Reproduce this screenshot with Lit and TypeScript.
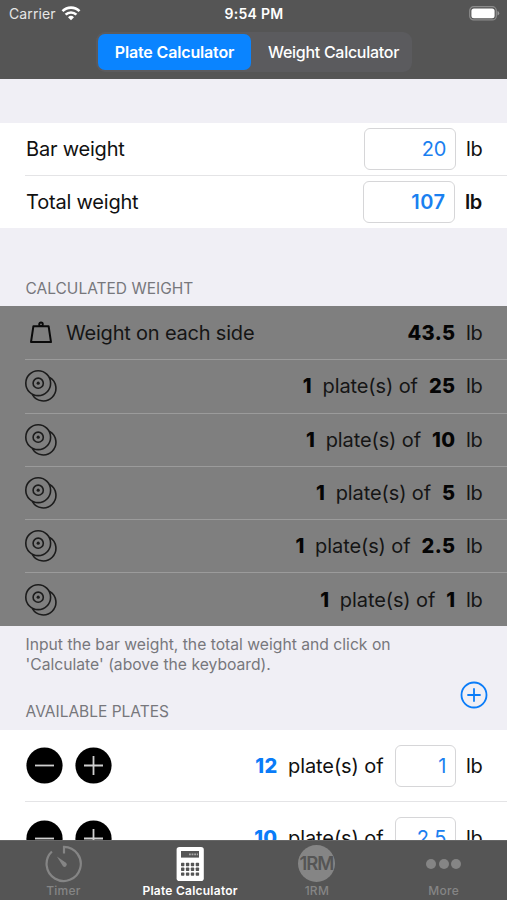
import { LitElement, html, css, svg } from "lit";
import { customElement } from "lit/decorators.js";

const weightIcon = html`<svg width="22" height="23" viewBox="0 0 22 23" fill="none" stroke="#0a0a0a">
  <path d="M3.4 5.2H18.6L21 21.1H1Z" stroke-width="2" stroke-linejoin="round"/>
  <circle cx="11" cy="3.3" r="1.8" stroke-width="1.9"/>
</svg>`;

const platesIcon = html`<svg width="32" height="32" viewBox="0 0 32 32" fill="none" stroke="#1c1c1c" stroke-width="1.6">
  <circle cx="13.2" cy="13.2" r="12.4"/>
  <circle cx="13.2" cy="13.2" r="5.1"/>
  <circle cx="13.2" cy="13.2" r="1.6" fill="#1c1c1c" stroke="none"/>
  <path d="M24.6 7.4A12.6 12.6 0 1 1 7.4 24.6"/>
</svg>`;

const roundButton = (plus: boolean) => html`<svg width="37" height="37" viewBox="0 0 37 37">
  <circle cx="18.5" cy="18.5" r="18.1" fill="#000"/>
  <path d=${plus ? "M9 18.5H28M18.5 9V28" : "M9 18.5H28"} stroke="#d0d0d0" stroke-width="1.8"/>
</svg>`;

const addIcon = html`<svg width="28" height="28" viewBox="0 0 28 28" fill="none" stroke="#0a7cf8">
  <circle cx="14" cy="14" r="12.5" stroke-width="1.8"/>
  <path d="M8 14H20M14 8V20" stroke-width="1.8" stroke-linecap="round"/>
</svg>`;

const timerIcon = html`<svg width="38" height="38" viewBox="0 0 38 38" fill="none" stroke="#858585">
  <path d="M20 8.5V1.8A17.1 17.1 0 1 1 7.9 6.5" stroke-width="2.2"/>
  <path d="M12.9 11.5L22 17.8A2.2 2.2 0 0 1 19 21.2Z" fill="#858585" stroke="none"/>
</svg>`;

const keys = [0, 1, 2].flatMap((r) => [0, 1, 2, 3].map((c) => ({ x: 5 + c * 4.9, y: 16.8 + r * 4.8 })));
const calcIcon = html`<svg width="28" height="36" viewBox="0 0 28 36">
  <rect x="0.6" y="1" width="27.2" height="34" rx="2.8" fill="#fff"/>
  <rect x="5" y="5" width="18" height="6.6" fill="#555"/>
  <path d="M13 8.3H22" stroke="#aaa" stroke-width="1.8" stroke-dasharray="1.8 .8"/>
  ${keys.map((k) => svg`<rect x=${k.x} y=${k.y} width="3.4" height="3.4" rx="0.7" fill="#555"/>`)}
</svg>`;

const wifiIcon = html`<svg width="20" height="15" viewBox="0 0 20 15" fill="none" stroke="#fff" stroke-width="2.6">
  <path d="M1.5 5.2A12 12 0 0 1 18.5 5.2"/>
  <path d="M4.6 8.7A7.6 7.6 0 0 1 15.4 8.7"/>
  <path d="M10 14.2L7 11.2A4.3 4.3 0 0 1 13 11.2Z" fill="#fff" stroke="none"/>
</svg>`;

const batteryIcon = html`<svg width="31" height="15" viewBox="0 0 31 15">
  <rect x="0.7" y="0.7" width="26.6" height="13.2" rx="4" fill="none" stroke="#8c8c8c" stroke-width="1.2"/>
  <rect x="2.4" y="2.4" width="23.2" height="9.8" rx="2.5" fill="#fff"/>
  <path d="M28.5 5V9.6Q30.2 9 30.2 7.3Q30.2 5.6 28.5 5Z" fill="#999"/>
</svg>`;

@customElement("app-root")
export class AppRoot extends LitElement {
  static styles = css`
    :host { display: flex; flex-direction: column; width: 507px; height: 900px; overflow: hidden;
      background: #f0eff5; color: #111; font: 400 20px/24px Inter, sans-serif; box-sizing: border-box; }
    * { box-sizing: border-box; }
    svg { display: block; flex: none; }
    header { height: 79px; flex: none; background: #555; color: #fff; }
    .status { display: grid; grid-template-columns: 1fr auto 1fr; align-items: center; height: 27px;
      padding: 0 7px 0 9px; font-size: 14px; line-height: 27px; }
    .carrier { display: flex; align-items: center; gap: 5px; color: #e6e6e6; letter-spacing: 0.1px; }
    .time { font-weight: 600; font-size: 14px; letter-spacing: 0.25px; margin-right: 1px; }
    .battery { justify-self: end; }
    .segments { display: flex; width: 316px; height: 40px; margin: 5px auto 0 96px; border-radius: 9px; padding: 2px;
      background: #5b5b5e; font-size: 16px; font-weight: 500; line-height: 36px; text-align: center; }
    .seg { flex: 1; letter-spacing: -0.28px; padding-left: 6px; }
    .seg.on { flex: 0 0 153px; padding-left: 0; border-radius: 7px; background: #0a84ff; font-weight: 600; letter-spacing: -0.15px; }
    main { flex: 1; min-height: 0; overflow: hidden; }
    .card { background: #fff; }
    .inputs { margin-top: 44px; height: 105px; }
    .row { display: flex; align-items: center; margin-left: 25px; padding-right: 25px; }
    .row + .row { border-top: 1px solid #e4e4e6; }
    .inputs .row { height: 52px; }
    .inputs .row + .row { height: 53px; }
    .grow { flex: 1; }
    .label { flex: 1; letter-spacing: -0.2px; }
    .field { width: 92px; height: 42px; border: 1.5px solid #d6d6d8; border-radius: 6px; background: #fff; color: #1a80f0;
      text-align: right; line-height: 40px; padding-right: 8px; margin-right: 10.5px; }
    .field.heavy { letter-spacing: 0.5px; }
    .field.small { width: 61px; }
    .unit { letter-spacing: -0.4px; width: 16px; white-space: nowrap; }
    .heavy { font-weight: 600; }
    .unit.heavy { width: 17px; }
    .caption { color: #77777c; font-size: 15.5px; line-height: 20px; padding-left: 25.5px; }
    .first { padding-top: 51px; height: 78px; }
    .result { background: #7f7f7f; height: 320px; color: #151515; }
    .result .row { height: 53.3px; }
    .result .row + .row { border-color: #9b9b9b; }
    .weighticon { margin: 0 14px 0 5px; }
    .amount { font-weight: 800; color: #050505; margin-right: 10.5px; letter-spacing: 0.4px; }
    .of { margin-right: 11px; letter-spacing: -0.1px; }
    .hint { color: #77777c; font-size: 15.7px; line-height: 19.6px; padding: 9px 0 0 25.5px; height: 55px; white-space: pre-line; }
    .available { display: flex; height: 49px; padding-right: 19px; justify-content: space-between; }
    .available .caption { padding-top: 21px; }
    .stock .row { height: 71px; }
    .stock .row + .row { height: 73px; }
    .inputs .label { padding-left: 1px; }
    .buttons { display: flex; gap: 12px; padding-left: 1px; }
    .stock .amount { color: #0a7cf8; }
    nav { height: 60px; flex: none; display: grid; grid-template-columns: repeat(4, 1fr); background: #555;
      border-top: 1px solid #666; color: #858585; font-size: 12px; font-weight: 500; line-height: 14px; text-align: center; }
    .tab { display: flex; flex-direction: column; align-items: center; letter-spacing: 0.25px; }
    .tab.on { color: #fff; font-weight: 600; }
    .glyph { height: 43px; display: flex; align-items: center; justify-content: center; padding-top: 2px; }
    .rm { width: 37px; height: 37px; border-radius: 50%; background: #858585; color: #555; font-size: 18.5px;
      line-height: 37px; font-weight: 600; letter-spacing: -1.1px; display: flex; justify-content: center; padding-right: 1px; }
    .dots { display: flex; gap: 2.7px; }
    .dot { width: 10px; height: 10px; border-radius: 50%; background: #858585; }
  `;

  private results = ["25", "10", "5", "2.5", "1"];
  private stock = [["12", "1"], ["10", "2.5"]];

  render() {
    return html`
      <header>
        <div class="status">
          <div class="carrier"><span>Carrier</span>${wifiIcon}</div>
          <div class="time">9:54 PM</div>
          <div class="battery">${batteryIcon}</div>
        </div>
        <div class="segments"><div class="seg on">Plate Calculator</div><div class="seg">Weight Calculator</div></div>
      </header>
      <main>
        <section class="card inputs">
          <div class="row"><span class="label">Bar weight</span><div class="field">20</div><span class="unit">lb</span></div>
          <div class="row"><span class="label">Total weight</span><div class="field heavy">107</div><span class="unit heavy">lb</span></div>
        </section>
        <div class="caption first">CALCULATED WEIGHT</div>
        <section class="result">
          <div class="row"><span class="weighticon">${weightIcon}</span><span class="label">Weight on each side</span><span class="amount">43.5</span><span class="unit">lb</span></div>
          ${this.results.map((w) => html`<div class="row">${platesIcon}<span class="grow"></span><span class="amount">1</span><span class="of">plate(s) of</span><span class="amount">${w}</span><span class="unit">lb</span></div>`)}
        </section>
        <div class="hint">Input the bar weight, the total weight and click on
'Calculate' (above the keyboard).</div>
        <div class="available"><div class="caption">AVAILABLE PLATES</div>${addIcon}</div>
        <section class="card stock">
          ${this.stock.map(([n, w]) => html`<div class="row"><div class="buttons">${roundButton(false)}${roundButton(true)}</div><span class="grow"></span><span class="amount">${n}</span><span class="of">plate(s) of</span><div class="field small">${w}</div><span class="unit">lb</span></div>`)}
        </section>
      </main>
      <nav>
        <div class="tab"><div class="glyph">${timerIcon}</div>Timer</div>
        <div class="tab on"><div class="glyph">${calcIcon}</div>Plate Calculator</div>
        <div class="tab"><div class="glyph"><div class="rm">1RM</div></div>1RM</div>
        <div class="tab"><div class="glyph"><div class="dots"><div class="dot"></div><div class="dot"></div><div class="dot"></div></div></div>More</div>
      </nav>`;
  }
}
